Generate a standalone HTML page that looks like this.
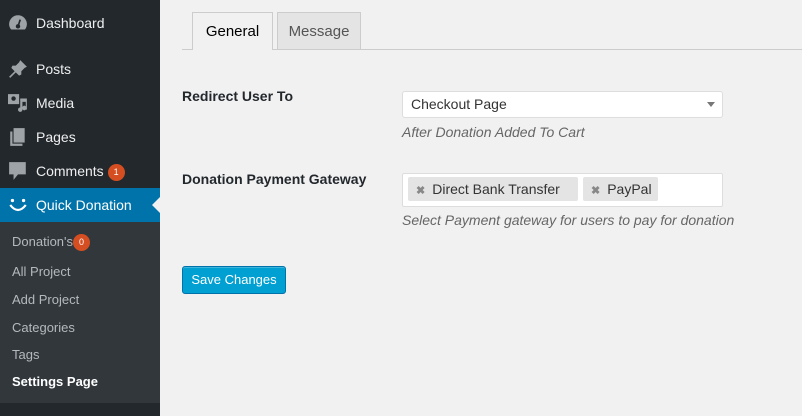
<!DOCTYPE html>
<html><head><style>
body{margin:0;width:802px;height:416px;background:#f1f1f1;font-family:"Liberation Sans",sans-serif;position:relative;overflow:hidden}
.sb{position:absolute;left:0;top:0;width:160px;height:416px;background:#23282d}
.mi{position:absolute;left:0;width:160px;height:34px;color:#eee;font-size:14px;line-height:34px}
.mi span{position:absolute;left:36px}
.ic{position:absolute;left:8px;top:8px;width:20px;height:18px}
.sub{position:absolute;left:0;top:222px;width:160px;height:181px;background:#32373c}
.si{position:absolute;left:12px;font-size:13px;color:#b4b9be}
.badge{display:inline-block;background:#d54e21;color:#fff;border-radius:9px;font-size:9px;width:17px;height:17px;line-height:17px;text-align:center;vertical-align:middle}
.tab{position:absolute;top:12px;height:36px;border:1px solid #ccc;border-bottom:none;font-size:15px;line-height:37px;text-align:center}
.lbl{position:absolute;left:182px;font-size:14px;font-weight:bold;color:#23282d}
.desc{position:absolute;left:402px;font-size:14px;font-style:italic;color:#666}
.box{position:absolute;left:402px;width:319px;background:#fff;border:1px solid #ddd;border-radius:2px}
.tag{position:absolute;top:3px;height:24px;background:#e4e4e4;border-radius:2px;font-size:14px;line-height:24px;color:#333}
.tag b{color:#888;font-size:11px;margin:0 7px 0 8px}
</style></head><body>
<div class="sb">
 <div class="mi" style="top:6px"><svg class="ic" viewBox="0 0 18 16"><path d="M9 1a8 8 0 0 0-8 8c0 2 .7 3.6 1.8 4.9h12.4A8 8 0 0 0 17 9a8 8 0 0 0-8-8z" fill="#9ea3a8"/><circle cx="9" cy="11" r="2" fill="#23282d"/><path d="M9 11L11 5" stroke="#23282d" stroke-width="1.5"/></svg><span>Dashboard</span></div>
 <div class="mi" style="top:52px"><svg class="ic" viewBox="0 0 18 16"><path d="M11 0l6 6-2 1-3 3 0 3-2 1-3-3-5 5-1-1 5-5-3-3 1-2 3 0 3-3z" fill="#9ea3a8"/></svg><span>Posts</span></div>
 <div class="mi" style="top:86px"><svg class="ic" viewBox="0 0 18 16"><rect x="0" y="0" width="10" height="9" fill="#9ea3a8"/><circle cx="5" cy="4" r="2" fill="#23282d"/><path d="M11 4h6v10h-1a2 2 0 1 1 0-3V7h-3v7a2 2 0 1 1-2-2z" fill="#9ea3a8"/></svg><span>Media</span></div>
 <div class="mi" style="top:120px"><svg class="ic" viewBox="0 0 18 16"><rect x="5" y="0" width="10" height="13" fill="#9ea3a8"/><path d="M2 3h2v11h9v2H2z" fill="#9ea3a8"/></svg><span>Pages</span></div>
 <div class="mi" style="top:154px"><svg class="ic" viewBox="0 0 18 16"><path d="M1 0h15v11H9l-4 5v-5H1z" fill="#9ea3a8"/></svg><span>Comments <span class="badge" style="position:static">1</span></span></div>
 <div class="mi" style="top:188px;background:#0073aa;color:#fff"><svg class="ic" viewBox="0 0 18 16"><circle cx="4" cy="4" r="1.5" fill="#fff"/><circle cx="14" cy="4" r="1.5" fill="#fff"/><path d="M2 8q7 9 14 0" stroke="#fff" stroke-width="2" fill="none"/></svg><span>Quick Donation</span>
 <div style="position:absolute;right:0;top:9px;width:0;height:0;border:8px solid transparent;border-right-color:#f1f1f1"></div></div>
 <div class="sub">
  <div class="si" style="top:12px">Donation's<span class="badge">0</span></div>
  <div class="si" style="top:42px">All Project</div>
  <div class="si" style="top:70px">Add Project</div>
  <div class="si" style="top:98px">Categories</div>
  <div class="si" style="top:125px">Tags</div>
  <div class="si" style="top:152px;color:#fff;font-weight:bold">Settings Page</div>
 </div>
</div>
<div style="position:absolute;left:182px;top:49px;width:620px;height:1px;background:#ccc"></div>
<div class="tab" style="left:192px;width:79px;height:37px;background:#f1f1f1;color:#000">General</div>
<div class="tab" style="left:277px;width:82px;background:#e4e4e4;color:#555">Message</div>
<div class="lbl" style="top:88px">Redirect User To</div>
<div class="box" style="top:91px;height:25px;border-radius:3px"><span style="position:absolute;left:8px;top:4px;font-size:14px;color:#333">Checkout Page</span><div style="position:absolute;right:7px;top:10px;border:4.5px solid transparent;border-top:5px solid #777"></div></div>
<div class="desc" style="top:124px">After Donation Added To Cart</div>
<div class="lbl" style="top:171px">Donation Payment Gateway</div>
<div class="box" style="top:173px;height:32px">
 <div class="tag" style="left:5px;width:170px"><b>✖</b>Direct Bank Transfer</div>
 <div class="tag" style="left:180px;width:75px"><b>✖</b>PayPal</div>
</div>
<div class="desc" style="top:212px">Select Payment gateway for users to pay for donation</div>
<div style="position:absolute;left:182px;top:266px;width:102px;height:26px;background:#00a0d2;border:1px solid #0073aa;border-radius:3px;color:#fff;font-size:13px;line-height:26px;text-align:center;box-shadow:inset 0 1px 0 rgba(120,200,230,.5)">Save Changes</div>
</body></html>
